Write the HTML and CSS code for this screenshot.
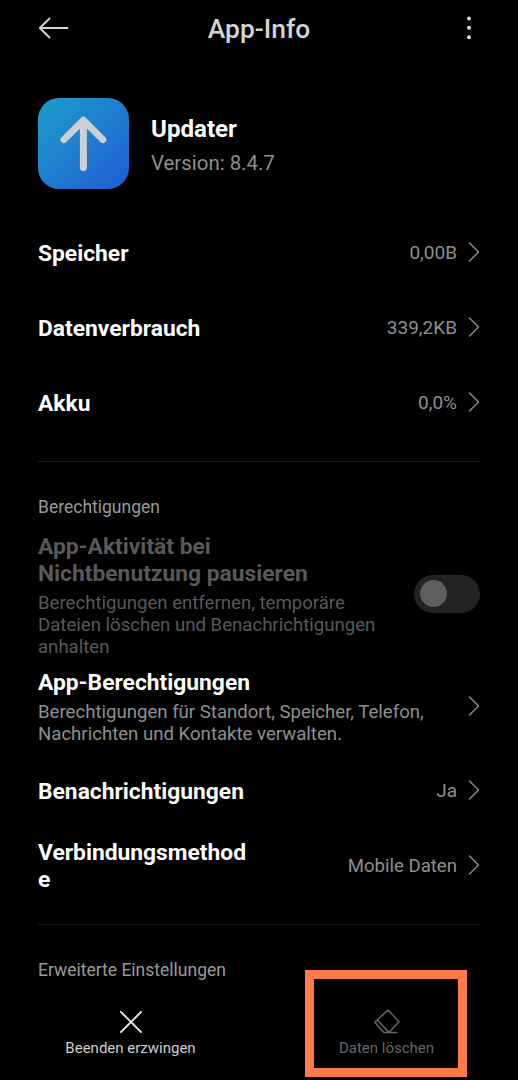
FILE: index.html
```html
<!DOCTYPE html>
<html lang="de">
<head>
<meta charset="utf-8">
<title>App-Info</title>
<link rel="stylesheet" href="styles.css">
</head>
<body>
<main class="screen">
  <header class="topbar">
    <svg class="back" viewBox="0 0 32 24" width="32" height="24"><path d="M11.5 2.5 1.8 12 11.5 21.5M2 12H29.6"/></svg>
    <h1 class="title">App-Info</h1>
    <svg class="more" viewBox="0 0 8 26" width="8" height="26"><circle cx="4" cy="3.4" r="2"/><circle cx="4" cy="12.8" r="2"/><circle cx="4" cy="22.2" r="2"/></svg>
  </header>

  <section class="app">
    <svg class="app-icon" viewBox="0 0 91 91" width="91" height="91">
      <defs><linearGradient id="tile" x1="0" y1="0" x2="1" y2="1"><stop offset="0" stop-color="#1b9ec9"/><stop offset=".5" stop-color="#1f7dd0"/><stop offset="1" stop-color="#205bd3"/></linearGradient></defs>
      <rect width="91" height="91" rx="21" fill="url(#tile)"/>
      <path d="M45.4 24V69.4M26 41.6 45.4 22.2 64.8 41.6"/>
    </svg>
    <div class="app-text">
      <h2 class="app-name">Updater</h2>
      <p class="version">Version: 8.4.7</p>
    </div>
  </section>

  <section class="group usage">
    <div class="row"><span class="label">Speicher</span><span class="value">0,00B</span><svg class="chevron" viewBox="0 0 12 20" width="12" height="20"><path d="M1.5 1 10.5 10 1.5 19"/></svg></div>
    <div class="row"><span class="label">Datenverbrauch</span><span class="value">339,2KB</span><svg class="chevron" viewBox="0 0 12 20" width="12" height="20"><path d="M1.5 1 10.5 10 1.5 19"/></svg></div>
    <div class="row"><span class="label">Akku</span><span class="value">0,0%</span><svg class="chevron" viewBox="0 0 12 20" width="12" height="20"><path d="M1.5 1 10.5 10 1.5 19"/></svg></div>
  </section>

  <section class="group permissions">
    <h3 class="section-title">Berechtigungen</h3>
    <div class="row detail disabled">
      <div class="copy">
        <span class="label">App-Aktivität bei<br>Nichtbenutzung pausieren</span>
        <p class="desc">Berechtigungen entfernen, temporäre<br>Dateien löschen und Benachrichtigungen<br>anhalten</p>
      </div>
      <span class="switch"><span class="knob"></span></span>
    </div>
    <div class="row detail">
      <div class="copy">
        <span class="label">App-Berechtigungen</span>
        <p class="desc">Berechtigungen für Standort, Speicher, Telefon,<br>Nachrichten und Kontakte verwalten.</p>
      </div>
      <svg class="chevron" viewBox="0 0 12 20" width="12" height="20"><path d="M1.5 1 10.5 10 1.5 19"/></svg>
    </div>
    <div class="row"><span class="label">Benachrichtigungen</span><span class="value">Ja</span><svg class="chevron" viewBox="0 0 12 20" width="12" height="20"><path d="M1.5 1 10.5 10 1.5 19"/></svg></div>
    <div class="row"><span class="label">Verbindungsmethod<br>e</span><span class="value connection">Mobile Daten</span><svg class="chevron" viewBox="0 0 12 20" width="12" height="20"><path d="M1.5 1 10.5 10 1.5 19"/></svg></div>
  </section>

  <section class="advanced">
    <h3 class="section-title">Erweiterte Einstellungen</h3>
  </section>

  <footer class="actions">
    <div class="action">
      <svg class="action-icon" viewBox="0 0 28 28" width="28" height="28"><path d="M4 4 24 24M24 4 4 24"/></svg>
      <span>Beenden erzwingen</span>
    </div>
    <div class="action dimmed">
      <svg class="action-icon" viewBox="0 0 28 28" width="28" height="28"><path d="M15 2 26 13.8 15.8 24.6H10.8L1.8 14.2ZM4.4 12 15.8 24.6M10.8 24.6H24"/></svg>
      <span>Daten löschen</span>
    </div>
  </footer>
  <div class="highlight"></div>
</main>
</body>
</html>
```
FILE: styles.css
```css
* { box-sizing: border-box; margin: 0; padding: 0; }

body {
  background: #000;
  font-family: Roboto, "Liberation Sans", sans-serif;
}

.screen {
  position: relative;
  width: 518px;
  height: 1080px;
  overflow: hidden;
  display: flex;
  flex-direction: column;
  padding: 0 38px;
  background: #000;
}

svg { flex: none; fill: none; }

.topbar {
  height: 56px;
  display: grid;
  grid-template-columns: 32px 1fr 32px;
  align-items: center;
}
.back { stroke: #d6d6d6; stroke-width: 1.8; stroke-linecap: round; stroke-linejoin: round; }
.title { text-align: center; font-size: 26.4px; font-weight: 500; line-height: 30px; color: #d4d4d4; padding-top: 1px; }
.more { fill: #dcdcdc; justify-self: end; margin-right: 7px; }

.app { display: flex; gap: 22px; margin-top: 42px; height: 91px; }
.app-icon path { stroke: #cdcfd2; stroke-width: 7; stroke-linecap: round; stroke-linejoin: round; }
.app-text { padding-top: 17px; }
.app-name { font-size: 24.1px; font-weight: 700; line-height: 28px; color: #fff; }
.version { font-size: 20.4px; line-height: 24px; margin-top: 8px; color: #8f8f8f; }

.group { border-bottom: 1px solid #1a1a1a; }
.usage { margin-top: 26px; height: 247px; }

.row { display: flex; align-items: center; height: 75px; }
.label { flex: 1; display: block; font-size: 22.8px; font-weight: 700; line-height: 27px; color: #fff; padding-top: 1px; }
.value { font-size: 19px; line-height: 24px; color: #8f8f8f; margin-right: 11px; }
.connection { font-size: 18.6px; padding-top: 1px; }
.chevron { stroke: #8a8a8a; stroke-width: 1.5; stroke-linecap: round; stroke-linejoin: round; margin-top: -1px; }

.section-title { font-size: 17.5px; font-weight: 400; line-height: 22px; color: #9a9a9a; }
.permissions { height: 463px; padding-top: 34px; }
.detail { height: auto; }
.copy { flex: 1; }
.detail .label { padding-top: 0; }
.detail .chevron { margin-top: -3px; }
.desc { font-size: 18.6px; line-height: 22px; color: #8f8f8f; margin-top: 5px; white-space: nowrap; }
.disabled { margin: 15px 0 11px; }
.disabled .label { color: #595959; }
.disabled .desc { color: #595959; }
.permissions .detail + .detail { margin-bottom: 8px; }

.switch { width: 66px; height: 38px; border-radius: 19px; background: #222; padding: 5px 5.5px; margin-bottom: 4px; }
.knob { display: block; width: 27px; height: 27px; border-radius: 50%; background: #5e5e5e; }

.advanced { padding-top: 34px; height: 83px; }

.actions { display: grid; grid-template-columns: 185px 187px; justify-content: space-between; }
.action { display: flex; flex-direction: column; align-items: center; font-size: 15px; line-height: 18px; gap: 3px; color: #cfcfcf; }
.action-icon { stroke: #dcdcdc; stroke-width: 2; stroke-linecap: round; stroke-linejoin: round; }
.dimmed { color: #666; }
.dimmed .action-icon { stroke: #666; stroke-width: 1.5; }

/* Callout frame lying over the clear-data action */
.highlight {
  position: absolute;
  left: 305px;
  top: 970px;
  width: 162px;
  height: 107px;
  border: 9px solid #ff7a47;
}
```
